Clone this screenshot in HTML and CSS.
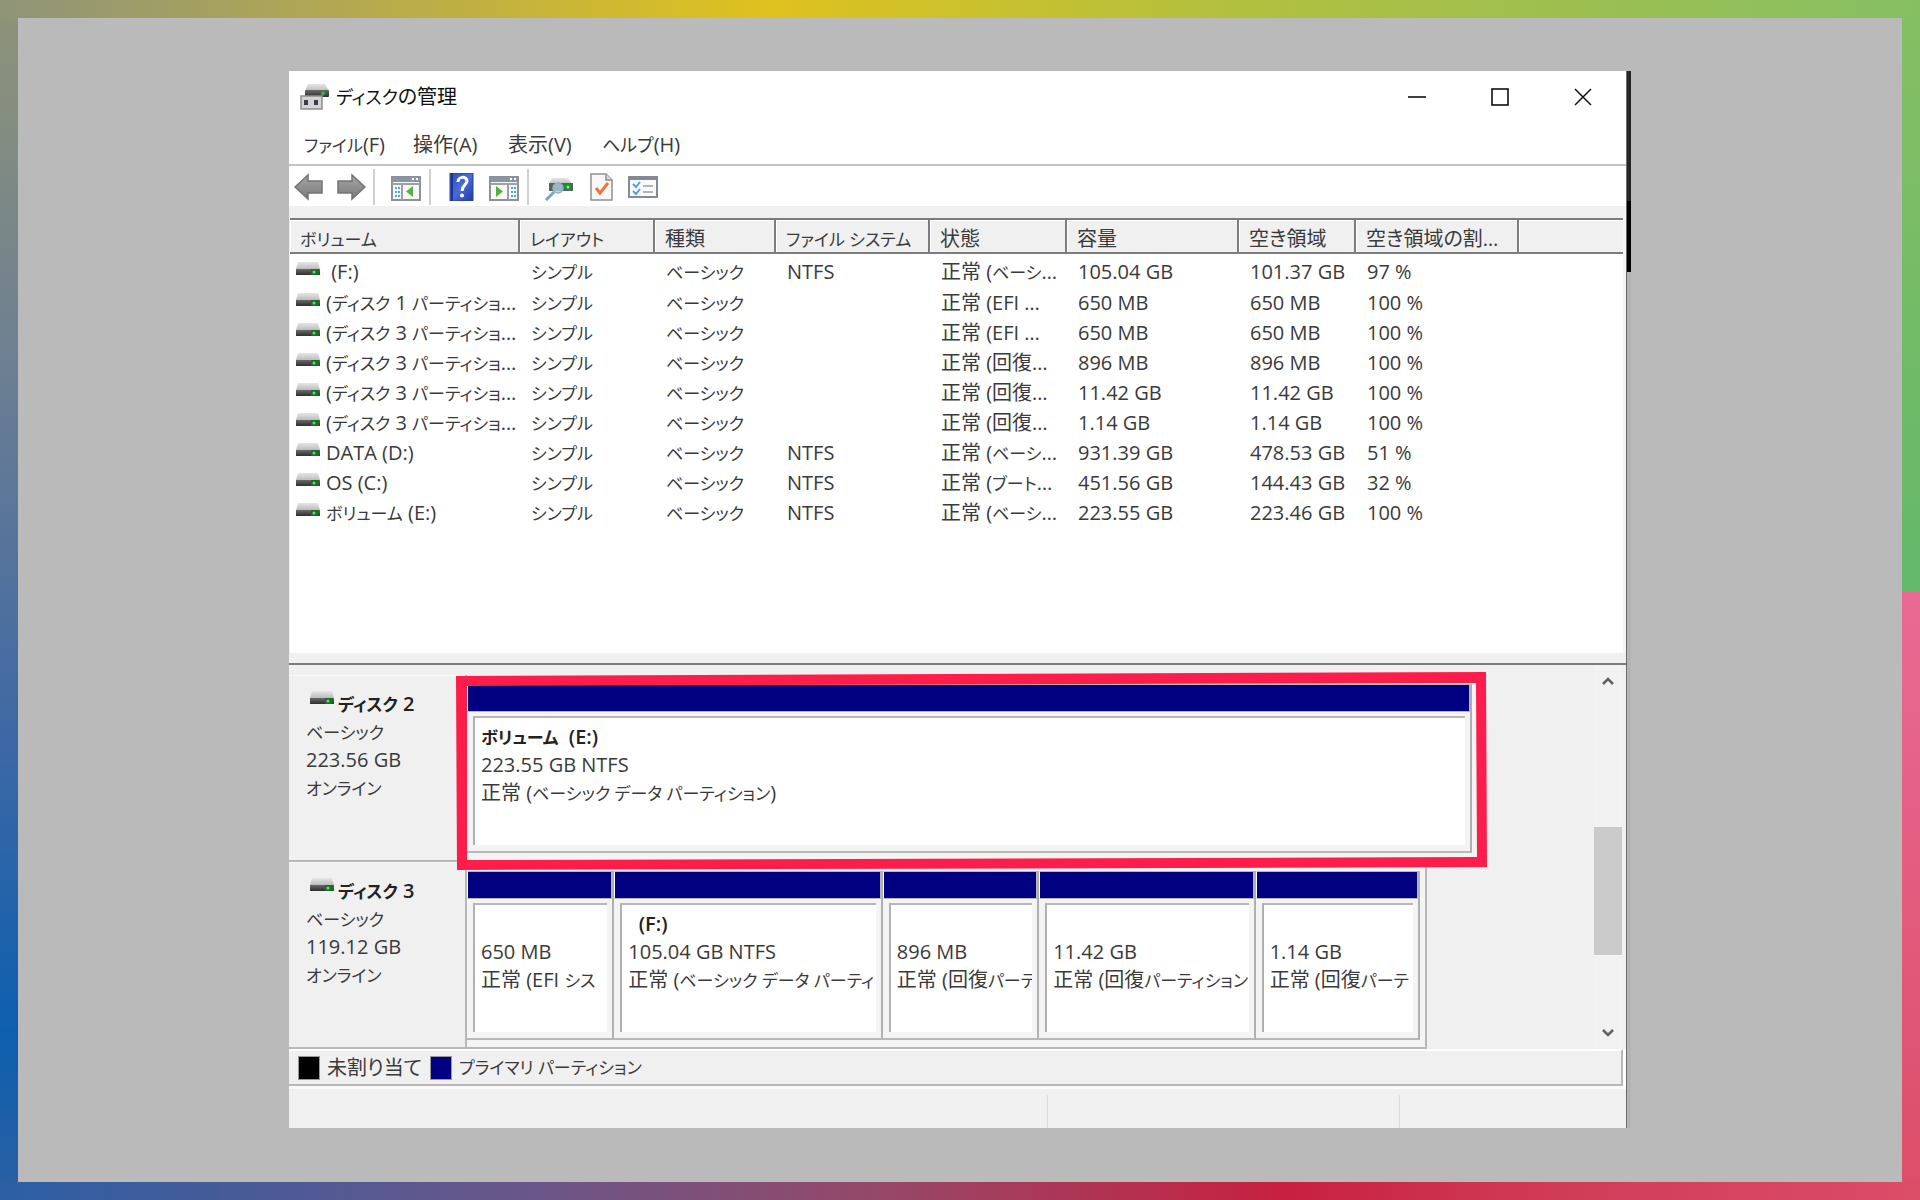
FILE: index.html
```html
<!DOCTYPE html>
<html lang="ja">
<head>
<meta charset="utf-8">
<title>ディスクの管理</title>
<link rel="stylesheet" href="styles.css">
</head>
<body>
<svg width="0" height="0" class="defs" aria-hidden="true">
  <defs>
    <linearGradient id="g-top" x1="0" y1="0" x2="0" y2="1"><stop offset="0" stop-color="#e6e6e6"/><stop offset="1" stop-color="#bcbcbc"/></linearGradient>
    <linearGradient id="g-front" x1="0" y1="0" x2="0" y2="1"><stop offset="0" stop-color="#6a6a6a"/><stop offset="1" stop-color="#2c2f2c"/></linearGradient>
    <linearGradient id="g-arrow" x1="0" y1="0" x2="0" y2="1"><stop offset="0" stop-color="#a4a4a4"/><stop offset="1" stop-color="#7c7c7c"/></linearGradient>
    <linearGradient id="g-help" x1="0" y1="0" x2="1" y2="1"><stop offset="0" stop-color="#2c4fbd"/><stop offset=".5" stop-color="#4a6bd6"/><stop offset="1" stop-color="#1f3a9c"/></linearGradient>
    <symbol id="drive" viewBox="0 0 24 14">
      <path d="M2 0h20l2 7H0z" fill="url(#g-top)"/>
      <rect x="0" y="7" width="24" height="6" fill="url(#g-front)"/>
      <rect x="15" y="7" width="8" height="6" fill="#1f6a2b"/>
      <circle cx="18" cy="10" r="1.500" fill="#5fe06a"/>
    </symbol>
  </defs>
</svg>
<div class="canvas">
<div class="shell">
<main class="window">
  <header class="titlebar">
    <svg class="app-icon" viewBox="0 0 30 28">
      <path d="M8 1h17l4 7H5z" fill="url(#g-top)"/>
      <rect x="5" y="7" width="24" height="7" rx="1" fill="url(#g-front)"/>
      <circle cx="23" cy="10.500" r="2" fill="#35b342"/>
      <rect x="1" y="13" width="21" height="13" fill="#d4d4d6" stroke="#8e8e92" stroke-width="1.500"/>
      <rect x="4" y="17" width="4" height="5" fill="#3d3d45"/><rect x="14" y="17" width="4" height="5" fill="#3d3d45"/>
    </svg>
    <h1><span class="kana">ディスク</span>の管理</h1>
    <div class="controls">
      <button aria-label="最小化"><svg viewBox="0 0 18 18"><path d="M0 9h18" stroke="#000" stroke-width="1.500"/></svg></button>
      <button aria-label="最大化"><svg viewBox="0 0 18 18"><path d="M1 1h16v16H1z" fill="none" stroke="#000" stroke-width="1.500"/></svg></button>
      <button aria-label="閉じる"><svg viewBox="0 0 18 18"><path d="M1 1l16 16M17 1L1 17" stroke="#111" stroke-width="1.500"/></svg></button>
    </div>
  </header>
  <nav class="menu">
    <button><span class="kana">ファイル</span>(F)</button><button>操作(A)</button><button>表示(V)</button><button><span class="kana">ヘルプ</span>(H)</button>
  </nav>
  <div class="toolbar">
    <div class="group nav-group">
      <button aria-label="戻る"><svg viewBox="0 0 30 28"><path d="M1 14L14 2v6h14v12H14v6z" fill="url(#g-arrow)" stroke="#737373" stroke-width="1.500"/></svg></button>
      <button aria-label="進む"><svg viewBox="0 0 30 28"><path d="M29 14L16 2v6H2v12h14v6z" fill="url(#g-arrow)" stroke="#737373" stroke-width="1.500"/></svg></button>
    </div>
    <div class="group">
      <button aria-label="コンソール ツリーの表示"><svg viewBox="0 0 30 28"><rect x="1" y="4" width="28" height="23" fill="#f7f7f7" stroke="#8a9199" stroke-width="2"/><rect x="1" y="4" width="28" height="5" fill="#8b96a3"/><path d="M21 6h2M25 6h2" stroke="#fff" stroke-width="2"/><path d="M1 11h28M11 11v16" stroke="#9aa1a9" stroke-width="2"/><path d="M4 15h5M4 19h5M4 23h5" stroke="#5aa0da" stroke-width="2" stroke-dasharray="2 1"/><path d="M22 13v11l-7-5.500z" fill="#56b13c"/></svg></button>
    </div>
    <div class="group">
      <button aria-label="ヘルプ"><svg viewBox="0 0 30 28"><rect x="3" y="0" width="23" height="28" fill="url(#g-help)" stroke="#2340a0"/><path d="M5 0v28" stroke="#1c3690" stroke-width="2"/><path d="M11 9c0-6 9-6 9-1 0 4-5 4-5 10" fill="none" stroke="#fff" stroke-width="3"/><circle cx="15" cy="22.500" r="2" fill="#fff"/></svg></button>
      <button aria-label="操作ウィンドウの表示"><svg viewBox="0 0 30 28"><rect x="1" y="4" width="28" height="23" fill="#f7f7f7" stroke="#8a9199" stroke-width="2"/><rect x="1" y="4" width="28" height="5" fill="#8b96a3"/><path d="M21 6h2M25 6h2" stroke="#fff" stroke-width="2"/><path d="M1 11h28M19 11v16" stroke="#9aa1a9" stroke-width="2"/><path d="M22 15h5M22 19h5M22 23h5" stroke="#5aa0da" stroke-width="2" stroke-dasharray="2 1"/><path d="M7 13v11l7-5.500z" fill="#56b13c"/></svg></button>
    </div>
    <div class="group last">
      <button aria-label="再スキャン"><svg viewBox="0 0 30 28"><path d="M8 5h16l4 6H5z" fill="url(#g-top)"/><rect x="5" y="10" width="24" height="8" fill="#53645f"/><rect x="19" y="11" width="9" height="6" fill="#1f8a35"/><circle cx="24" cy="14" r="1.500" fill="#7ef08a"/><circle cx="14" cy="15" r="5" fill="#a9ccdf" fill-opacity=".8" stroke="#8fb0c4" stroke-width="1.500"/><path d="M10 19l-8 8" stroke="#7fa3bd" stroke-width="3"/></svg></button>
      <button aria-label="プロパティ"><svg viewBox="0 0 30 28"><path d="M5 1h15l6 6v20H5z" fill="#f8f8f8" stroke="#909090" stroke-width="1.500"/><path d="M20 1v6h6" fill="#ddd" stroke="#909090" stroke-width="1.500"/><path d="M10 15l4 5 8-10" fill="none" stroke="#f0733a" stroke-width="3"/></svg></button>
      <button aria-label="一覧"><svg viewBox="0 0 30 28"><rect x="1" y="4" width="28" height="20" fill="#fafafa" stroke="#838a91" stroke-width="2"/><path d="M1 5.500h28" stroke="#838a91" stroke-width="3"/><path d="M5 11l3 3 4-5M5 18l3 3 4-5" fill="none" stroke="#4da0e2" stroke-width="2"/><path d="M15 13h10M15 19h10" stroke="#b7b7b7" stroke-width="2"/></svg></button>
    </div>
  </div>
  <section class="volumes">
    <table>
      <colgroup><col class="c1"><col class="c2"><col class="c3"><col class="c4"><col class="c5"><col class="c6"><col class="c7"><col class="c8"><col></colgroup>
      <thead><tr><th><span class="kana">ボリューム</span></th><th><span class="kana">レイアウト</span></th><th>種類</th><th><span class="kana">ファイル システム</span></th><th>状態</th><th>容量</th><th>空き領域</th><th>空き領域の割…</th><th></th></tr></thead>
      <tbody>
        <tr><td><svg class="drive"><use href="#drive"/></svg>&nbsp;(F:)</td><td><span class="kana">シンプル</span></td><td><span class="kana">ベーシック</span></td><td>NTFS</td><td>正常 (<span class="kana">ベーシ</span>…</td><td>105.04 GB</td><td>101.37 GB</td><td>97 %</td><td></td></tr>
        <tr><td><svg class="drive"><use href="#drive"/></svg>(<span class="kana">ディスク</span> 1 <span class="kana">パーティショ</span>…</td><td><span class="kana">シンプル</span></td><td><span class="kana">ベーシック</span></td><td></td><td>正常 (EFI …</td><td>650 MB</td><td>650 MB</td><td>100 %</td><td></td></tr>
        <tr><td><svg class="drive"><use href="#drive"/></svg>(<span class="kana">ディスク</span> 3 <span class="kana">パーティショ</span>…</td><td><span class="kana">シンプル</span></td><td><span class="kana">ベーシック</span></td><td></td><td>正常 (EFI …</td><td>650 MB</td><td>650 MB</td><td>100 %</td><td></td></tr>
        <tr><td><svg class="drive"><use href="#drive"/></svg>(<span class="kana">ディスク</span> 3 <span class="kana">パーティショ</span>…</td><td><span class="kana">シンプル</span></td><td><span class="kana">ベーシック</span></td><td></td><td>正常 (回復…</td><td>896 MB</td><td>896 MB</td><td>100 %</td><td></td></tr>
        <tr><td><svg class="drive"><use href="#drive"/></svg>(<span class="kana">ディスク</span> 3 <span class="kana">パーティショ</span>…</td><td><span class="kana">シンプル</span></td><td><span class="kana">ベーシック</span></td><td></td><td>正常 (回復…</td><td>11.42 GB</td><td>11.42 GB</td><td>100 %</td><td></td></tr>
        <tr><td><svg class="drive"><use href="#drive"/></svg>(<span class="kana">ディスク</span> 3 <span class="kana">パーティショ</span>…</td><td><span class="kana">シンプル</span></td><td><span class="kana">ベーシック</span></td><td></td><td>正常 (回復…</td><td>1.14 GB</td><td>1.14 GB</td><td>100 %</td><td></td></tr>
        <tr><td><svg class="drive"><use href="#drive"/></svg>DATA (D:)</td><td><span class="kana">シンプル</span></td><td><span class="kana">ベーシック</span></td><td>NTFS</td><td>正常 (<span class="kana">ベーシ</span>…</td><td>931.39 GB</td><td>478.53 GB</td><td>51 %</td><td></td></tr>
        <tr><td><svg class="drive"><use href="#drive"/></svg>OS (C:)</td><td><span class="kana">シンプル</span></td><td><span class="kana">ベーシック</span></td><td>NTFS</td><td>正常 (<span class="kana">ブート</span>…</td><td>451.56 GB</td><td>144.43 GB</td><td>32 %</td><td></td></tr>
        <tr><td><svg class="drive"><use href="#drive"/></svg><span class="kana">ボリューム</span> (E:)</td><td><span class="kana">シンプル</span></td><td><span class="kana">ベーシック</span></td><td>NTFS</td><td>正常 (<span class="kana">ベーシ</span>…</td><td>223.55 GB</td><td>223.46 GB</td><td>100 %</td><td></td></tr>
      </tbody>
    </table>
  </section>
  <section class="graphic">
    <div class="disks">
      <article class="disk">
        <div class="disk-label"><h2><svg class="drive"><use href="#drive"/></svg><span class="kana">ディスク</span> 2</h2><p><span class="kana">ベーシック</span></p><p>223.56 GB</p><p><span class="kana">オンライン</span></p></div>
        <div class="parts one">
          <div class="part"><div class="bar"></div><div class="info"><h3><span class="kana">ボリューム</span>&nbsp; (E:)</h3><p>223.55 GB NTFS</p><p>正常 (<span class="kana">ベーシック データ パーティション</span>)</p></div></div>
        </div>
        <svg class="highlight" viewBox="0 0 1032 200" preserveAspectRatio="none"><path fill="#fc1d4b" fill-rule="evenodd" d="M0 4L1030 0L1031 196L1 199zM11 14L1020 11L1021 186L11 189z"/></svg>
      </article>
      <article class="disk">
        <div class="disk-label"><h2><svg class="drive"><use href="#drive"/></svg><span class="kana">ディスク</span> 3</h2><p><span class="kana">ベーシック</span></p><p>119.12 GB</p><p><span class="kana">オンライン</span></p></div>
        <div class="parts five">
          <div class="part"><div class="bar"></div><div class="info"><h3>&nbsp;</h3><p>650 MB</p><p>正常 (EFI <span class="kana">シス</span></p></div></div>
          <div class="part"><div class="bar"></div><div class="info"><h3>&nbsp; (F:)</h3><p>105.04 GB NTFS</p><p>正常 (<span class="kana">ベーシック データ パーティ</span></p></div></div>
          <div class="part"><div class="bar"></div><div class="info"><h3>&nbsp;</h3><p>896 MB</p><p>正常 (回復<span class="kana">パーテ</span></p></div></div>
          <div class="part"><div class="bar"></div><div class="info"><h3>&nbsp;</h3><p>11.42 GB</p><p>正常 (回復<span class="kana">パーティション</span></p></div></div>
          <div class="part"><div class="bar"></div><div class="info"><h3>&nbsp;</h3><p>1.14 GB</p><p>正常 (回復<span class="kana">パーテ</span></p></div></div>
        </div>
      </article>
    </div>
    <div class="scrollbar">
      <button aria-label="上へ"><svg viewBox="0 0 12 8"><path d="M1 7l5-5 5 5" fill="none" stroke="#606060" stroke-width="2.500"/></svg></button>
      <div class="thumb"></div>
      <button aria-label="下へ"><svg viewBox="0 0 12 8"><path d="M1 1l5 5 5-5" fill="none" stroke="#606060" stroke-width="2.500"/></svg></button>
    </div>
  </section>
  <div class="legend"><span class="key unalloc">未割り当て</span><span class="key primary"><span class="kana">プライマリ パーティション</span></span></div>
  <footer class="status"><span></span><span></span><span></span></footer>
</main>
<div class="edge"></div>
</div>
</div>
</body>
</html>
```
FILE: styles.css
```css
* { box-sizing: border-box; }
body {
  margin: 0;
  min-height: 100vh;
  padding: 18px;
  display: flex;
  font: 20px/28px "Open Sans", "Noto Sans CJK JP", sans-serif;
  font-feature-settings: "palt";
  color: #3a3a3a;
  background:
    linear-gradient(90deg, #8f9478, #dfc21f 40%, #b5c03c 62%, #86bf63) top / 100% 18px no-repeat,
    linear-gradient(90deg, #2c5fa4, #6b5688 28%, #964868 46%, #c8203f 67%, #d03a55 80%, #dc4d68) bottom / 100% 18px no-repeat,
    linear-gradient(180deg, #8f9478, #6d7f92 30%, #3d68a5 62%, #0d5fae 86%, #2c5fa4) left / 18px 100% no-repeat,
    linear-gradient(180deg, #86bf63, #63b86a 49.300%, #ea6a94 49.300%, #dc4d68) right / 18px 100% no-repeat;
}
.defs { position: absolute; }
h1, h2, h3, p { margin: 0; font-size: 20px; font-weight: 400; }
button { border: 0; padding: 0; background: none; font: inherit; color: inherit; font-feature-settings: inherit; }
.kana { font-size: 17px; line-height: 20px; }
.canvas { flex: 1; display: flex; padding: 53px 271px 54px; background: #bababa; }
.shell { flex: 1; display: flex; min-width: 0; }
.window { flex: 1; min-width: 0; display: flex; flex-direction: column; background: #fff; border-right: 1px solid #6c6c6c; }
.edge { width: 4px; background: linear-gradient(#262626, #262626 130px, #000 130px, #000 201px, #b4b4b4 201px); }

.titlebar { display: flex; align-items: center; height: 52px; padding: 0 2px 0 11px; color: #111; }
.titlebar .kana { font-size: 18px; }
.app-icon { width: 30px; height: 28px; margin-right: 6px; }
.controls { display: flex; margin-left: auto; }
.controls button { width: 83px; height: 52px; }
.controls svg { width: 18px; height: 18px; display: block; margin: auto; }
.menu { display: grid; grid-template-columns: 109px 95px 94px 100px; padding: 7px 15px 5px; height: 43px; border-bottom: 2px solid #c2c2c2; }
.menu button { text-align: left; white-space: nowrap; }
.menu button:last-child .kana { font-size: 18px; }
.toolbar { display: flex; height: 40px; padding: 3px 5px 1px; }
.group { display: flex; align-items: center; gap: 12px; padding: 0 8px 0 16px; border-right: 2px solid #d0d0d0; }
.group.nav-group { padding-left: 0; padding-right: 7px; }
.group.last { padding-left: 15px; border: 0; }
.group button, .group svg { display: block; width: 30px; height: 28px; }

.volumes { flex: 1; border-top: 12px solid #f0f0f0; border-right: 3px solid #f4f4f4; border-left: 1px solid #f0f0f0; }
table { width: 100%; table-layout: fixed; border-collapse: separate; border-spacing: 0; }
.c1 { width: 230px; } .c2 { width: 135px; } .c3 { width: 121px; } .c4 { width: 154px; } .c5 { width: 137px; } .c6 { width: 172px; } .c7 { width: 117px; } .c8 { width: 163px; }
th { height: 36px; padding: 5px 0 0 10px; background: #f0f0f0; border-top: 2px solid #7c7c7c; border-bottom: 2px solid #7c7c7c; border-right: 2px solid #7c7c7c; box-shadow: inset 1px 1px #fff; font-weight: 400; text-align: left; white-space: nowrap; line-height: 27px; }
th:last-child { border-right: 0; }
td { height: 30px; padding: 1px 0 0 11px; line-height: 28px; white-space: nowrap; }
td:first-child { padding-left: 6px; }
tbody tr:first-child td { height: 33px; padding-top: 2px; }
.drive { width: 24px; height: 14px; margin-right: 6px; vertical-align: 3px; }

.graphic { display: flex; background: #f0f0f0; border-top: 2px solid #7c7c7c; padding-right: 4px; position: relative; box-shadow: 0 -10px #f0f0f0; }
.disks { flex: 1; min-width: 0; padding-top: 10px; }
.disk { position: relative; display: flex; height: 187px; }
.disk-label { width: 176px; padding: 14px 0 0 17px; border-bottom: 2px solid #b8b8b8; border-top: 1px solid #fafafa; line-height: 28px; }
.disk-label h2 { padding-left: 4px; font-weight: 600; color: #222; white-space: nowrap; }
.disk-label h2 .drive { margin-right: 4px; vertical-align: 6px; }
.parts { display: grid; padding: 9px 5px 7px 0; border: 2px solid #b8b8b8; border-top: 0; background: #f4f4f4; }
.one { flex: 0 1 1014px; grid-template-columns: 1fr; }
.five { flex: 0 1 962px; grid-template-columns: 147fr 268fr 156fr 216fr 164fr; }
.part { min-width: 0; display: flex; flex-direction: column; border-right: 2px solid #b0b0b0; border-bottom: 2px solid #b8b8b8; }
.bar { height: 28px; background: #000080; border: 1px solid #b8b8b8; border-left-color: #fff; }
.info { flex: 1; margin: 4px 5px 6px 6px; padding: 5px 0 0 6px; background: #fff; border-top: 2px solid #b8b8b0; border-left: 2px solid #b0b0b0; line-height: 28px; }
.info p, .info h3 { overflow: hidden; white-space: nowrap; }
.info h3 { font-weight: 600; color: #222; }
.highlight { position: absolute; left: 167px; top: -3px; width: 1032px; height: 199px; z-index: 1; }
.scrollbar { width: 28px; display: flex; flex-direction: column; align-items: center; background: #f2f2f2; }
.scrollbar button { width: 28px; height: 32px; }
.scrollbar svg { width: 12px; height: 8px; display: block; margin: auto; }
.thumb { width: 28px; height: 128px; margin: 130px 0 auto; background: #cbcbcb; }
.legend { display: flex; gap: 8px; padding: 4px 9px; height: 37px; margin-right: 3px; background: #f0f0f0; border-top: 2px solid #fff; border-right: 2px solid #b8b8b8; border-bottom: 2px solid #b8b8b8; }
.key { display: flex; align-items: center; gap: 7px; white-space: nowrap; }
.key::before { content: ""; width: 20px; height: 22px; border: 1px solid #999; background: #000; }
.primary::before { background: #000080; }
.status { display: grid; grid-template-columns: 760fr 352fr 226fr; height: 42px; padding-top: 6px; background: #f0f0f0; border-top: 3px solid #fafafa; }
.status span { border-right: 1px solid #dcdcdc; }
.status span:last-child { border: 0; }
```
